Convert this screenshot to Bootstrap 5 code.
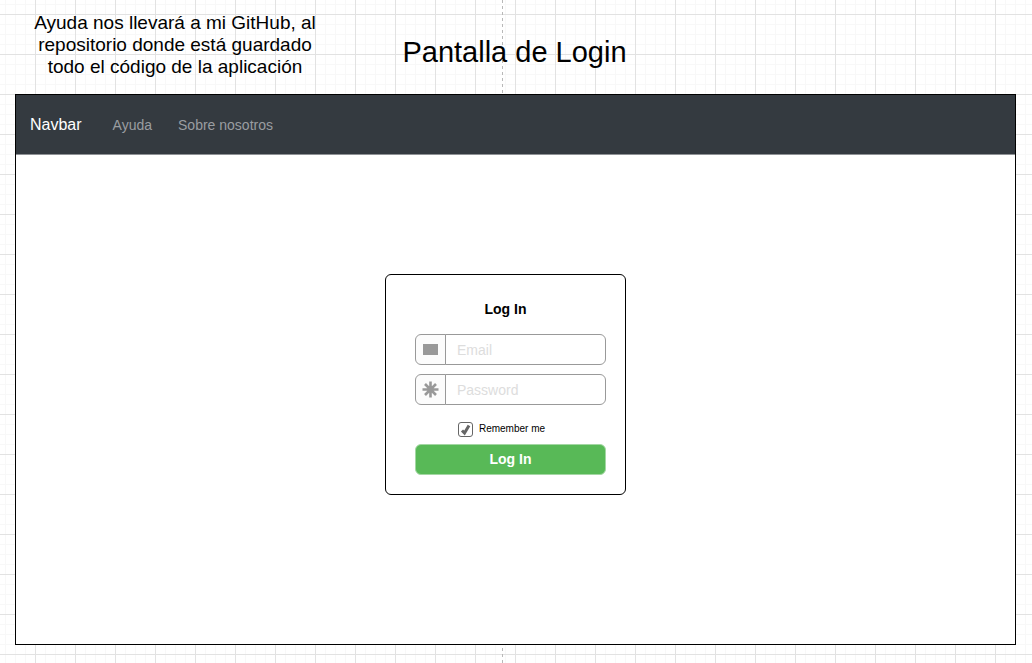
<!DOCTYPE html>
<html lang="es">
<head>
<meta charset="utf-8">
<meta name="viewport" content="width=device-width, initial-scale=1">
<title>Pantalla de Login</title>
<link href="https://cdn.jsdelivr.net/npm/bootstrap@5.3.0/dist/css/bootstrap.min.css" rel="stylesheet">
<style>
  body {
    font-family: "Liberation Sans", Arial, sans-serif;
    font-size: 14px;
    line-height: 20px;
    color: #000;
    background-color: #fff;
    /* page divider, then major grid lines, then minor grid lines */
    background-image:
      repeating-linear-gradient(to bottom, #b8b8b8 0 3px, #fff 3px 6px),
      linear-gradient(to right, #e2e2e2 1px, transparent 1px),
      linear-gradient(to bottom, #e2e2e2 1px, transparent 1px),
      linear-gradient(to right, #f8f8f8 1px, transparent 1px),
      linear-gradient(to bottom, #f8f8f8 1px, transparent 1px);
    background-size: 1px 100%, 40px 40px, 40px 40px, 10px 10px, 10px 10px;
    background-position: 502px 0, 35px 14px, 35px 14px, 5px 4px, 5px 4px;
    background-repeat: no-repeat, repeat, repeat, repeat, repeat;
  }
  .sheet { padding: 0 16px 18px 15px; }
  .heading-row {
    display: grid;
    grid-template-columns: 320px 1fr 322px;
    height: 94px;
    padding-top: 12px;
  }
  .note { font-size: 19px; line-height: 22px; padding: 0 16px; }
  .screen-title { font-size: 29px; line-height: 32px; padding-top: 24px; }
  .screen { border: 1px solid #000; background: #fff; flex: 1; }
  .top-nav {
    height: 60px;
    padding: 0 14px;
    background: #343a40;
    border-bottom: 1px solid #8f9296;
  }
  .top-nav .navbar-brand { font-size: 16px; margin-right: 31px; padding: 0; color: #fff; }
  .top-nav .navbar-nav .nav-link { font-size: 14px; padding: 0; color: #9a9da0; }
  .top-nav .navbar-nav { gap: 26px; }
  .login-area { padding: 119px 20px 20px 0; }
  .login-card { width: 241px; border: 1px solid #000; border-radius: 6px; padding-bottom: 19px; }
  .login-title { font-size: 14px; font-weight: 700; line-height: 20px; margin: 24px 0 15px; }
  .login-form { padding: 0 19px 0 29px; }
  .field { margin-bottom: 9px; height: 31px; }
  .field .input-group-text {
    width: 31px;
    padding: 0;
    justify-content: center;
    color: #999;
    background: #fcfcfc;
    border-color: #999;
    border-radius: 6px 0 0 6px;
  }
  .field .form-control {
    padding: 1px 11px 0;
    font-size: 14px;
    color: #000;
    background: #fff;
    border-color: #999;
    border-radius: 0 6px 6px 0;
  }
  .field .form-control::placeholder { color: #ddd; }
  .remember { height: 30px; padding-right: 18px; gap: 6px; font-size: 10px; }
  .remember .form-check-input {
    width: 15px;
    height: 15px;
    border: 1px solid #666;
    border-radius: 3px;
  }
  .remember .form-check-input:checked {
    background-color: #fff;
    background-image: url("data:image/svg+xml,%3Csvg xmlns='http://www.w3.org/2000/svg' viewBox='0 0 13 13'%3E%3Cpath d='M3 7.500L5.500 10L10 2.500' fill='none' stroke='%23666' stroke-width='3'/%3E%3C/svg%3E");
  }
  .btn-login {
    height: 31px;
    padding: 0;
    font-size: 14px;
    font-weight: 700;
    color: #fff;
    background: #58b957;
    border: 1px solid #a3d7a3;
    border-radius: 6px;
  }
</style>
</head>
<body>
<div class="sheet d-flex flex-column min-vh-100">
  <header class="heading-row text-center">
    <p class="note m-0">Ayuda nos llevará a mi GitHub, al repositorio donde está guardado todo el código de la aplicación</p>
    <h1 class="screen-title fw-normal m-0 text-nowrap">Pantalla de Login</h1>
  </header>
  <main class="screen">
    <nav class="top-nav navbar navbar-expand justify-content-start">
      <a class="navbar-brand" href="#">Navbar</a>
      <ul class="navbar-nav">
        <li class="nav-item"><a class="nav-link" href="#">Ayuda</a></li>
        <li class="nav-item"><a class="nav-link" href="#">Sobre nosotros</a></li>
      </ul>
    </nav>
    <section class="login-area d-flex justify-content-center">
      <div class="login-card">
        <h2 class="login-title text-center">Log In</h2>
        <form class="login-form">
          <div class="field input-group flex-nowrap">
            <label class="input-group-text" for="email" aria-label="Email">
              <svg width="15" height="11" aria-hidden="true"><rect width="15" height="11" fill="currentColor"/></svg>
            </label>
            <input class="form-control" id="email" type="email" placeholder="Email">
          </div>
          <div class="field input-group flex-nowrap">
            <label class="input-group-text" for="password" aria-label="Password">
              <svg width="17" height="17" viewBox="0 0 17 17" fill="none" stroke="currentColor" stroke-width="2.6" aria-hidden="true"><path d="M8.500 .5V16.500M.5 8.500H16.500M3 3L14 14M14 3L3 14"/></svg>
            </label>
            <input class="form-control" id="password" type="password" placeholder="Password">
          </div>
          <div class="remember d-flex align-items-center justify-content-center">
            <input class="form-check-input m-0" id="remember" type="checkbox" checked>
            <label for="remember">Remember me</label>
          </div>
          <button class="btn btn-login w-100 d-block" type="submit">Log In</button>
        </form>
      </div>
    </section>
  </main>
</div>
<script src="https://cdn.jsdelivr.net/npm/bootstrap@5.3.0/dist/js/bootstrap.bundle.min.js"></script>
</body>
</html>
